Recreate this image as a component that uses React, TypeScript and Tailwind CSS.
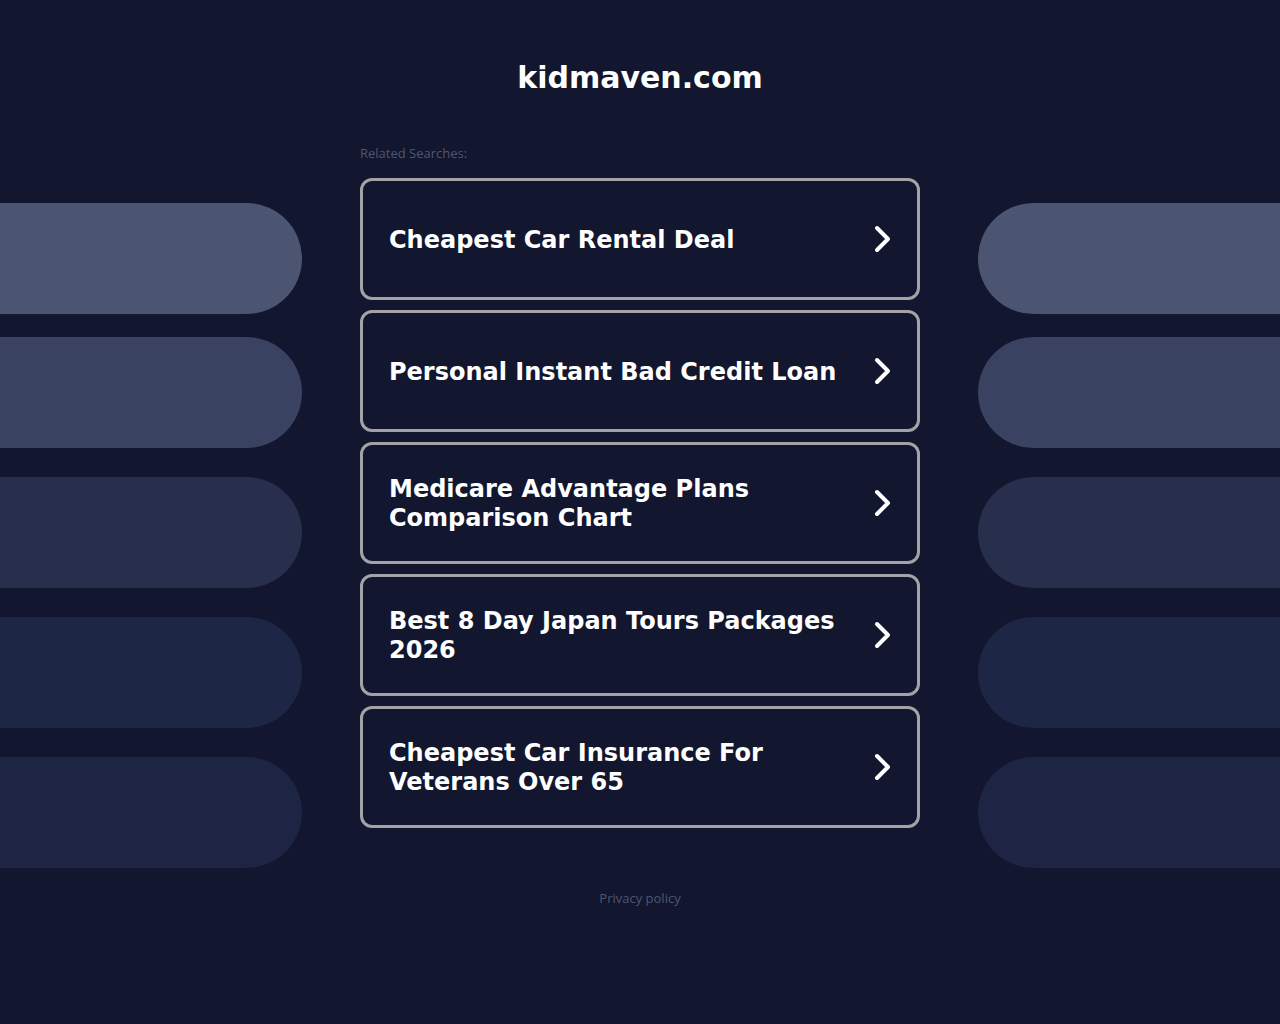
import React from "react";

const items = [
  "Cheapest Car Rental Deal",
  "Personal Instant Bad Credit Loan",
  "Medicare Advantage Plans Comparison Chart",
  "Best 8 Day Japan Tours Packages 2026",
  "Cheapest Car Insurance For Veterans Over 65",
];

function Chevron() {
  return (
    <svg width="20" height="30" viewBox="0 0 20 30" fill="none">
      <path d="M4 4 L15 15 L4 26" stroke="white" strokeWidth="4" strokeLinecap="round" strokeLinejoin="round" />
    </svg>
  );
}

function Pills({ side }: { side: "left" | "right" }) {
  const round = side === "left" ? "rounded-r-full" : "rounded-l-full";
  return (
    <div className="flex flex-col pt-[203px]">
      <div className={`h-[111px] bg-[#4b5571] ${round}`} />
      <div className={`mt-[23px] h-[111px] bg-[#3a4261] ${round}`} />
      <div className={`mt-[29px] h-[111px] bg-[#272f4c] ${round}`} />
      <div className={`mt-[29px] h-[111px] bg-[#1e2645] ${round}`} />
      <div className={`mt-[29px] h-[111px] bg-[#1d2444] ${round}`} />
    </div>
  );
}

export default function App() {
  return (
    <div className="min-h-[1024px] w-[1280px] bg-[#12162e] font-['DejaVu_Sans',sans-serif] overflow-hidden">
      <div className="grid grid-cols-[302px_560px_302px] gap-x-[58px]">
        <Pills side="left" />
        <div className="flex flex-col">
          <h1 className="pt-[59px] text-center text-[30px] font-bold leading-[38px] text-white">kidmaven.com</h1>
          <div className="mt-[48px] text-[13px] leading-[16px] text-[#4d5673] font-['Open_Sans',sans-serif]">Related Searches:</div>
          <div className="mt-[17px] flex flex-col gap-[10px]">
            {items.map((t) => (
              <div
                key={t}
                className="flex h-[122px] items-center justify-between rounded-[12px] border-[3px] border-[#a2a2a7] pl-[26px] pr-[24px]"
              >
                <span className="max-w-[460px] pt-[2px] text-[24px] font-bold leading-[29px] text-white">{t}</span>
                <Chevron />
              </div>
            ))}
          </div>
          <div className="mt-[62px] text-center text-[13px] leading-[16px] text-[#4d5673] font-['Open_Sans',sans-serif]">Privacy policy</div>
        </div>
        <Pills side="right" />
      </div>
    </div>
  );
}
